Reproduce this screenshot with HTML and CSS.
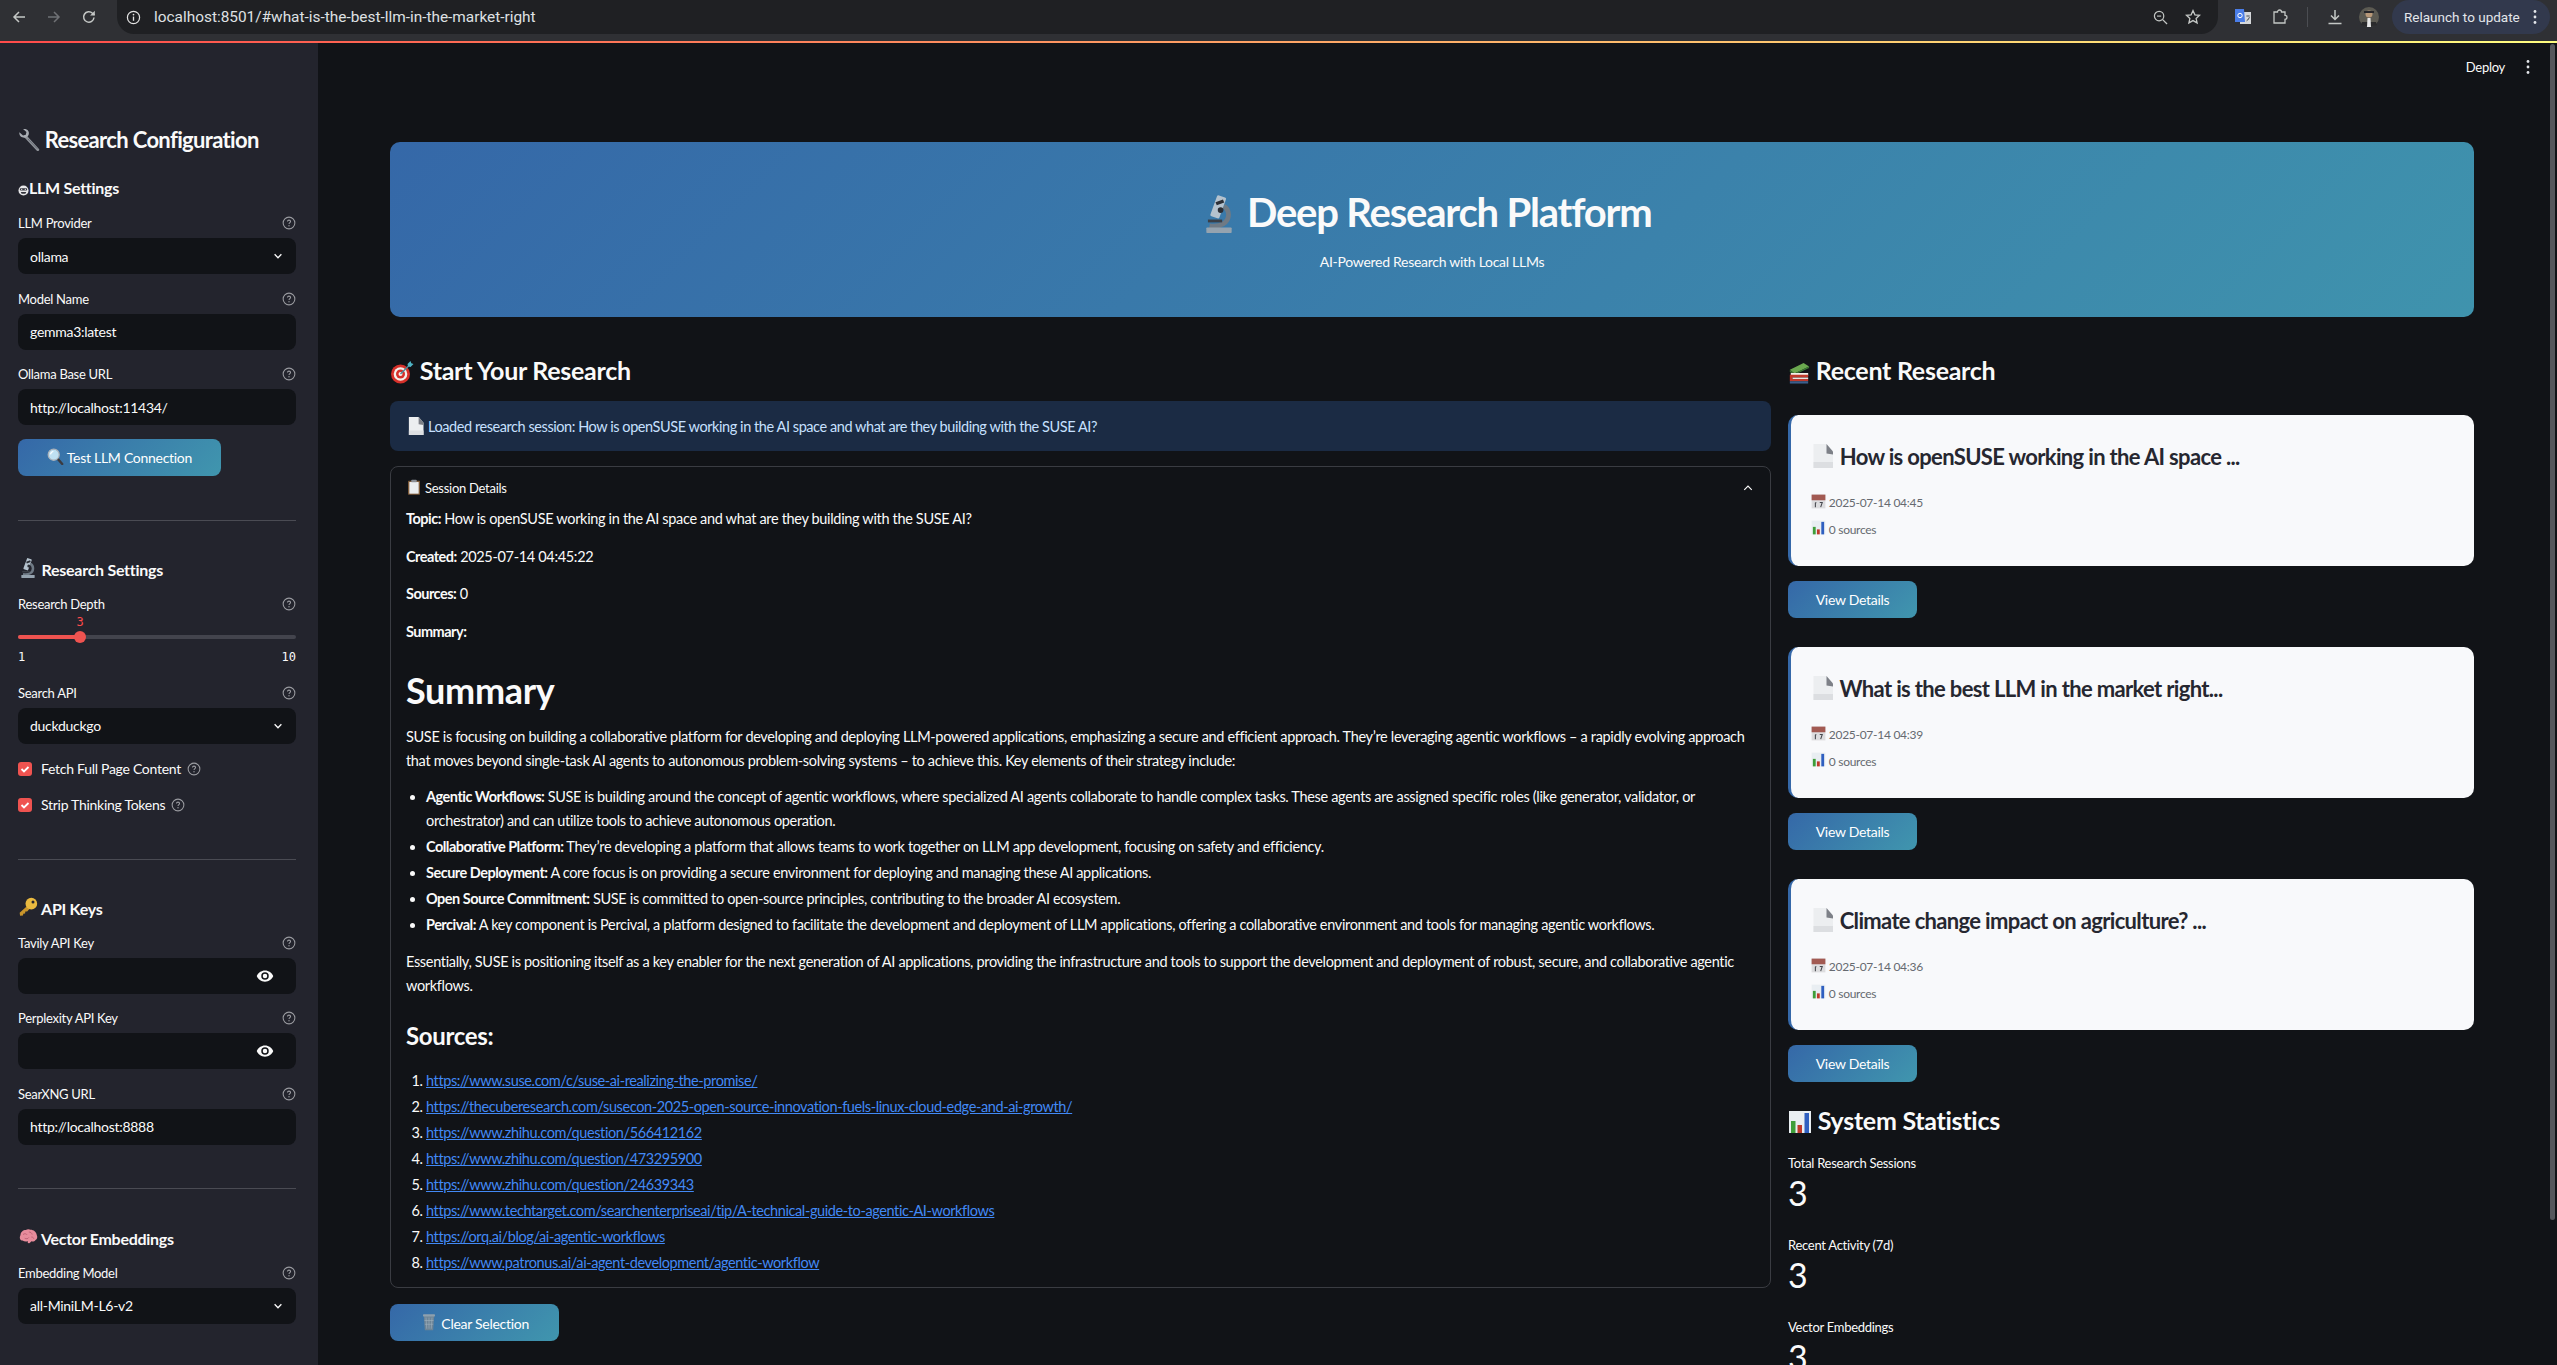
FILE: index.html
```html
<!DOCTYPE html>
<html lang="en">
<head>
    <meta charset="utf-8">
    <title>Deep Research Platform</title>
    <link rel="stylesheet" href="styles.css">
</head>
<body>

<!-- Emoji drawings, reused below -->
<svg class="defs" width="0" height="0" aria-hidden="true">
    <symbol id="e-wrench" viewBox="0 0 24 24">
        <path d="M8.500 8.500 21.500 22.500" stroke="#8e9298" stroke-width="3.200" stroke-linecap="round"/>
        <path d="M1.500 3.500 5.500 7l3-.7.7-3L5.500 0c3-.6 5.500.8 6.200 3.200.4 1.500.1 3-.8 4.300-1 1.300-2.500 2-4 2C3.500 9.500 1 7 1.500 3.500z" fill="#a9adb3"/>
        <path d="M11 11 21 21.500" stroke="#5f656e" stroke-width=".9"/>
    </symbol>
    <symbol id="e-robot" viewBox="0 0 24 24">
        <circle cx="12" cy="12" r="11" fill="#e8e8ea"/>
        <rect x="4" y="7" width="16" height="5" rx="2" fill="#33343c"/>
        <circle cx="8" cy="9.500" r="1.500" fill="#e8e8ea"/><circle cx="16" cy="9.500" r="1.500" fill="#e8e8ea"/>
        <path d="M6 15h12l-2 4H8z" fill="#33343c"/>
    </symbol>
    <symbol id="e-micro" viewBox="0 0 24 24">
        <path d="M6 19.500c7 1 12-2 12-7 0-2.500-1.200-4.500-3-5.500" fill="none" stroke="#6f7a85" stroke-width="3"/>
        <rect x="4" y="20.500" width="16" height="3.500" rx=".5" fill="#95a3af"/>
        <rect x="8.500" y=".5" width="6" height="14" rx="1" fill="#b4c2ce" transform="rotate(20 11.500 7.500)"/>
        <path d="M9.800 4.500 14.500 2.800l.8 2-4.700 1.700z" fill="#2b2e35"/>
        <circle cx="13" cy="9.500" r="1.800" fill="#2b2e35"/>
        <rect x="5" y="15.500" width="9" height="1.800" fill="#3a3f47"/>
    </symbol>
    <symbol id="e-target" viewBox="0 0 24 24">
        <circle cx="10.500" cy="14" r="9.500" fill="#d6302a"/>
        <circle cx="10.500" cy="14" r="6.800" fill="#f4f0ec"/>
        <circle cx="10.500" cy="14" r="4.500" fill="#d6302a"/>
        <circle cx="10.500" cy="14" r="2" fill="#f4f0ec"/>
        <path d="M10.500 14 19 5.500" stroke="#4a8a9a" stroke-width="1.500"/>
        <path d="M17.500 4 20.500 1l.8 2.200 2.200.8-3 3-2.400-.5z" fill="#4fb3c4"/>
    </symbol>
    <symbol id="e-page" viewBox="0 0 24 24">
        <path d="M2.500 0h13L22 7.500V24H2.500z" fill="#eceef0"/>
        <path d="M15.500 0 22 7.500v3l-6.500-1z" fill="#7d8087"/>
        <path d="M2.500 18h19.500v6H2.500z" fill="#dcdee1"/>
    </symbol>
    <symbol id="e-clip" viewBox="0 0 24 24">
        <rect x="3" y="2.500" width="18" height="21" rx="1" fill="#7d5a38"/>
        <rect x="5" y="4.500" width="14" height="17.500" fill="#eceef0"/>
        <rect x="8" y="1" width="8" height="4" rx="1" fill="#8c8f96"/>
    </symbol>
    <symbol id="e-lens" viewBox="0 0 24 24">
        <path d="m14 14 7.500 8.500" stroke="#3b3b40" stroke-width="3.400" stroke-linecap="round"/>
        <circle cx="9.500" cy="9.500" r="7.800" fill="#bfe0f2" stroke="#aab2ba" stroke-width="1.800"/>
        <path d="M5 9c.3-2.200 1.800-3.800 4-4" stroke="#fff" stroke-width="1.600" fill="none"/>
    </symbol>
    <symbol id="e-key" viewBox="0 0 24 24">
        <path d="m13 9-11 10 .5 3.500 3.500-.3.300-2.200 2.200-.3.300-2.200 2.200-.2L15 13z" fill="#c9952b"/>
        <circle cx="16" cy="8" r="7" fill="#e9b93f"/>
        <circle cx="18" cy="6" r="1.800" fill="#24252e"/>
    </symbol>
    <symbol id="e-brain" viewBox="0 0 24 24">
        <path d="M3 9.500C3 6 6 3.500 9.500 3.500c1.200-1 4-1.200 5.500-.2 3.800 0 7 2.700 7.500 6.200 1.200 2.200.6 5-1.500 6-1 1.600-3 2.300-5 1.700-.5.900-1.300 1.800-2.500 2.300l-1.800-.2.300-2.300c-2.200.7-5 .5-6.500-.8-2.500 0-4.500-2.700-2.500-6.700z" fill="#e88c9c"/>
        <path d="M6 9c2-1.500 4-1 5 .5M13 6c2 0 3.500 1 4 3M8 13.500c2 1 4 .8 5-1M16 12c1.500 0 2.700.7 3 2" stroke="#b85c70" stroke-width="1" fill="none"/>
    </symbol>
    <symbol id="e-trash" viewBox="0 0 24 24">
        <path d="M5 4h14l-1.500 19h-11z" fill="#6d8496"/>
        <path d="M8 6l1 15M12 6v15M16 6l-1 15M6 10h12M6.500 15h11" stroke="#9fb2c0" stroke-width=".8"/>
        <rect x="4" y="1.500" width="16" height="3" rx="1" fill="#8ea0ae"/>
    </symbol>
    <symbol id="e-books" viewBox="0 0 24 24">
        <path d="M2 8.500 17 1l6 4L7 12.500z" fill="#6aa84f"/>
        <path d="M2 8.500v2.500l5 3 16-7.500V5L7 12.500z" fill="#3d7a35"/>
        <path d="M3 12h19v3H3z" fill="#f1efe9"/>
        <path d="M2 14h20v3H5v1.500h17V21H2z" fill="#c0392b"/>
        <path d="M5 17h17v1.500H5z" fill="#f1efe9"/>
        <path d="M2 21h20v2.500H2z" fill="#3b5e8c"/>
    </symbol>
    <symbol id="e-cal" viewBox="0 0 24 24">
        <rect x="1" y="1" width="22" height="22" fill="#dddddf"/>
        <rect x="1" y="1" width="22" height="9" fill="#a25a52"/>
        <path d="M8.500 13.500 7 14.500V21M14 13.500h4l-2.500 7.500" stroke="#46484e" stroke-width="1.700" fill="none"/>
    </symbol>
    <symbol id="e-chart" viewBox="0 0 24 24">
        <rect x="1" y="1" width="22" height="22" fill="#e9eef2"/>
        <rect x="3" y="11" width="4.500" height="12" fill="#3f9e3a"/>
        <rect x="9.500" y="15" width="4.500" height="8" fill="#c0392b"/>
        <rect x="16.500" y="3" width="4.500" height="20" fill="#2f5fc0"/>
    </symbol>
    <symbol id="i-help" viewBox="0 0 16 16">
        <circle cx="8" cy="8" r="6.700" fill="none" stroke="#9a9ba0" stroke-width="1.200"/>
        <path d="M6.200 6.300C6.300 5.200 7 4.700 8 4.700c1.100 0 1.800.7 1.800 1.500 0 1.300-1.800 1.400-1.800 3" fill="none" stroke="#9a9ba0" stroke-width="1.200"/>
        <circle cx="8" cy="11.200" r=".8" fill="#9a9ba0"/>
    </symbol>
    <symbol id="i-chevron" viewBox="0 0 16 16">
        <path d="M3.500 5.800 8 10.300l4.500-4.500" fill="none" stroke="#fafafa" stroke-width="1.800"/>
    </symbol>
    <symbol id="i-eye" viewBox="0 0 24 24">
        <path d="M12 4.500C7 4.500 2.700 7.600 1 12c1.700 4.400 6 7.500 11 7.500s9.300-3.100 11-7.500c-1.700-4.400-6-7.500-11-7.500zm0 12.500a5 5 0 1 1 0-10 5 5 0 0 1 0 10zm0-8a3 3 0 1 0 0 6 3 3 0 0 0 0-6z" fill="#fafafa"/>
    </symbol>
    <symbol id="i-kebab" viewBox="0 0 4 16">
        <circle cx="2" cy="2.500" r="1.400"/><circle cx="2" cy="8" r="1.400"/><circle cx="2" cy="13.500" r="1.400"/>
    </symbol>
</svg>

<!-- Browser toolbar -->
<div class="chrome">
    <div class="nav-btns">
        <svg class="nav-icon" viewBox="0 0 16 16"><path d="M14 8H3M8 3 3 8l5 5" fill="none" stroke="#c4c7c5" stroke-width="1.500"/></svg>
        <svg class="nav-icon" viewBox="0 0 16 16"><path d="M2 8h11M8 3l5 5-5 5" fill="none" stroke="#6f7175" stroke-width="1.500"/></svg>
        <svg class="nav-icon" viewBox="0 0 16 16"><path d="M13 8.500A5.200 5.200 0 1 1 11.500 4.300L13.500 6" fill="none" stroke="#c4c7c5" stroke-width="1.500"/><path d="M13.800 1.800v4.700H9.100z" fill="#c4c7c5"/></svg>
    </div>
    <div class="omnibox">
        <span class="site-info">
            <svg viewBox="0 0 16 16" width="15" height="15"><circle cx="8" cy="8" r="6.500" fill="none" stroke="#e3e3e3" stroke-width="1.300"/><path d="M8 7v4.500" stroke="#e3e3e3" stroke-width="1.400"/><circle cx="8" cy="4.900" r=".9" fill="#e3e3e3"/></svg>
        </span>
        <span class="url">localhost:8501/#what-is-the-best-llm-in-the-market-right</span>
        <span class="omni-icons">
            <svg viewBox="0 0 16 16" width="15" height="15"><circle cx="6.500" cy="6.500" r="5" fill="none" stroke="#c4c7c5" stroke-width="1.300"/><path d="m10.300 10.300 4.700 4.700" stroke="#c4c7c5" stroke-width="1.400"/><path d="M4.300 6.500h4.400" stroke="#c4c7c5" stroke-width="1.200"/></svg>
            <svg viewBox="0 0 16 16" width="16" height="16"><path d="m8 1.600 1.900 4.200 4.600.5-3.400 3.100 1 4.500L8 11.600l-4.100 2.300 1-4.500L1.500 6.300l4.600-.5z" fill="none" stroke="#c4c7c5" stroke-width="1.300"/></svg>
        </span>
    </div>
    <div class="tool-icons">
        <svg viewBox="0 0 16 16" width="16" height="16"><rect x="5" y="3" width="11" height="12" fill="#d5d7da"/><path d="M0 0h9l1 13H0z" fill="#4a7de8"/><circle cx="5" cy="6.500" r="2.200" fill="none" stroke="#fff" stroke-width="1"/><path d="M11 7h4M13 6v2M11.500 12c1.500-1 2.500-2 3-4" stroke="#6c7078" stroke-width=".9"/></svg>
        <svg viewBox="0 0 16 16" width="16" height="16"><path d="M2 3h3.500a2 2 0 0 1 4 0H13v3.300a2 2 0 0 1 0 4V14H2z" fill="none" stroke="#c4c7c5" stroke-width="1.300"/></svg>
        <span class="tool-sep"></span>
        <svg viewBox="0 0 16 16" width="16" height="16"><path d="M8 1v9M4 6.500 8 10.500l4-4M1.500 14.500h13" fill="none" stroke="#c4c7c5" stroke-width="1.500"/></svg>
        <svg class="avatar" viewBox="0 0 20 20" width="20" height="20"><circle cx="10" cy="10" r="10" fill="#5c5a52"/><path d="M3 15h14l1 3-8 2-8-2z" fill="#2a2a2c"/><circle cx="10" cy="7" r="3.500" fill="#b89878"/><path d="M5 4h10v2H5z" fill="#26262a"/><path d="M8.500 11h3l.5 9H8z" fill="#e8e8e8"/></svg>
    </div>
    <div class="relaunch">
        <span>Relaunch to update</span>
        <svg class="kebab" viewBox="0 0 4 16" width="4" height="16"><use href="#i-kebab"/></svg>
    </div>
</div>
<div class="deco-line"></div>

<div class="app">
    <!-- Sidebar -->
    <aside class="sidebar">
        <h2 class="side-title"><svg class="emoji em-22"><use href="#e-wrench"/></svg> Research Configuration</h2>

        <h3 class="sec-head sec-first"><svg class="emoji em-11"><use href="#e-robot"/></svg>LLM Settings</h3>
        <div class="field">
            <div class="field-label"><span>LLM Provider</span><svg class="help"><use href="#i-help"/></svg></div>
            <div class="control">ollama<svg class="chev"><use href="#i-chevron"/></svg></div>
        </div>
        <div class="field">
            <div class="field-label"><span>Model Name</span><svg class="help"><use href="#i-help"/></svg></div>
            <div class="control">gemma3:latest</div>
        </div>
        <div class="field">
            <div class="field-label"><span>Ollama Base URL</span><svg class="help"><use href="#i-help"/></svg></div>
            <div class="control">http://localhost:11434/</div>
        </div>
        <button class="btn btn-side"><svg class="emoji em-17"><use href="#e-lens"/></svg> Test LLM Connection</button>

        <hr class="side-rule">

        <h3 class="sec-head"><svg class="emoji em-20"><use href="#e-micro"/></svg> Research Settings</h3>
        <div class="field-label"><span>Research Depth</span><svg class="help"><use href="#i-help"/></svg></div>
        <div class="slider">
            <div class="slider-value">3</div>
            <div class="slider-track"><div class="slider-fill"></div><div class="slider-thumb"></div></div>
            <div class="slider-ends"><span>1</span><span>10</span></div>
        </div>
        <div class="field field-tight">
            <div class="field-label"><span>Search API</span><svg class="help"><use href="#i-help"/></svg></div>
            <div class="control">duckduckgo<svg class="chev"><use href="#i-chevron"/></svg></div>
        </div>
        <div class="check"><span class="box"><svg viewBox="0 0 14 14" width="14" height="14"><path d="m3.500 7 2.500 2.500 4.500-4.500" fill="none" stroke="#fff" stroke-width="1.800"/></svg></span>Fetch Full Page Content<svg class="help help-inline"><use href="#i-help"/></svg></div>
        <div class="check"><span class="box"><svg viewBox="0 0 14 14" width="14" height="14"><path d="m3.500 7 2.500 2.500 4.500-4.500" fill="none" stroke="#fff" stroke-width="1.800"/></svg></span>Strip Thinking Tokens<svg class="help help-inline"><use href="#i-help"/></svg></div>

        <hr class="side-rule rule-checks">

        <h3 class="sec-head"><svg class="emoji em-20"><use href="#e-key"/></svg> API Keys</h3>
        <div class="field">
            <div class="field-label"><span>Tavily API Key</span><svg class="help"><use href="#i-help"/></svg></div>
            <div class="control"><svg class="eye"><use href="#i-eye"/></svg></div>
        </div>
        <div class="field">
            <div class="field-label"><span>Perplexity API Key</span><svg class="help"><use href="#i-help"/></svg></div>
            <div class="control"><svg class="eye"><use href="#i-eye"/></svg></div>
        </div>
        <div class="field">
            <div class="field-label"><span>SearXNG URL</span><svg class="help"><use href="#i-help"/></svg></div>
            <div class="control">http://localhost:8888</div>
        </div>

        <hr class="side-rule rule-keys">

        <h3 class="sec-head sec-vector"><svg class="emoji em-20"><use href="#e-brain"/></svg> Vector Embeddings</h3>
        <div class="field">
            <div class="field-label"><span>Embedding Model</span><svg class="help"><use href="#i-help"/></svg></div>
            <div class="control">all-MiniLM-L6-v2<svg class="chev"><use href="#i-chevron"/></svg></div>
        </div>
    </aside>

    <!-- Main -->
    <main class="main">
        <div class="top-actions">
            <span>Deploy</span>
            <svg class="kebab" viewBox="0 0 4 16" width="4" height="16"><use href="#i-kebab"/></svg>
        </div>

        <header class="hero">
            <h1><svg class="emoji em-38"><use href="#e-micro"/></svg> Deep Research Platform</h1>
            <p>AI-Powered Research with Local LLMs</p>
        </header>

        <div class="columns">
            <section class="col-left">
                <h2 class="col-head"><svg class="emoji em-24"><use href="#e-target"/></svg> Start Your Research</h2>
                <div class="alert"><svg class="emoji em-18"><use href="#e-page"/></svg> Loaded research session: How is openSUSE working in the AI space and what are they building with the SUSE AI?</div>

                <div class="expander">
                    <div class="exp-head">
                        <span><svg class="emoji em-16"><use href="#e-clip"/></svg> Session Details</span>
                        <svg class="exp-chev" viewBox="0 0 16 16" width="12" height="12"><path d="M3 10.500 8 5.500l5 5" fill="none" stroke="#fafafa" stroke-width="1.600"/></svg>
                    </div>
                    <div class="exp-body">
                        <p class="meta-line"><b>Topic:</b> How is openSUSE working in the AI space and what are they building with the SUSE AI?</p>
                        <p class="meta-line"><b>Created:</b> 2025-07-14 04:45:22</p>
                        <p class="meta-line"><b>Sources:</b> 0</p>
                        <p class="meta-line"><b>Summary:</b></p>

                        <h1 class="doc-h1">Summary</h1>
                        <p class="doc-p">SUSE is focusing on building a collaborative platform for developing and deploying LLM-powered applications, emphasizing a secure and efficient approach. They’re leveraging agentic workflows – a rapidly evolving approach<br>that moves beyond single-task AI agents to autonomous problem-solving systems – to achieve this. Key elements of their strategy include:</p>
                        <ul class="doc-list">
                            <li><b>Agentic Workflows:</b> SUSE is building around the concept of agentic workflows, where specialized AI agents collaborate to handle complex tasks. These agents are assigned specific roles (like generator, validator, or<br>orchestrator) and can utilize tools to achieve autonomous operation.</li>
                            <li><b>Collaborative Platform:</b> They’re developing a platform that allows teams to work together on LLM app development, focusing on safety and efficiency.</li>
                            <li><b>Secure Deployment:</b> A core focus is on providing a secure environment for deploying and managing these AI applications.</li>
                            <li><b>Open Source Commitment:</b> SUSE is committed to open-source principles, contributing to the broader AI ecosystem.</li>
                            <li><b>Percival:</b> A key component is Percival, a platform designed to facilitate the development and deployment of LLM applications, offering a collaborative environment and tools for managing agentic workflows.</li>
                        </ul>
                        <p class="doc-p">Essentially, SUSE is positioning itself as a key enabler for the next generation of AI applications, providing the infrastructure and tools to support the development and deployment of robust, secure, and collaborative agentic<br>workflows.</p>

                        <h3 class="doc-h3">Sources:</h3>
                        <ol class="doc-links">
                            <li><a href="#">https://www.suse.com/c/suse-ai-realizing-the-promise/</a></li>
                            <li><a href="#">https://thecuberesearch.com/susecon-2025-open-source-innovation-fuels-linux-cloud-edge-and-ai-growth/</a></li>
                            <li><a href="#">https://www.zhihu.com/question/566412162</a></li>
                            <li><a href="#">https://www.zhihu.com/question/473295900</a></li>
                            <li><a href="#">https://www.zhihu.com/question/24639343</a></li>
                            <li><a href="#">https://www.techtarget.com/searchenterpriseai/tip/A-technical-guide-to-agentic-AI-workflows</a></li>
                            <li><a href="#">https://orq.ai/blog/ai-agentic-workflows</a></li>
                            <li><a href="#">https://www.patronus.ai/ai-agent-development/agentic-workflow</a></li>
                        </ol>
                    </div>
                </div>
                <button class="btn btn-clear"><svg class="emoji em-18"><use href="#e-trash"/></svg> Clear Selection</button>
            </section>

            <section class="col-right">
                <h2 class="col-head"><svg class="emoji em-22"><use href="#e-books"/></svg> Recent Research</h2>

                <div class="card">
                    <h3><svg class="emoji em-24"><use href="#e-page"/></svg> How is openSUSE working in the AI space ...</h3>
                    <p><svg class="emoji em-15"><use href="#e-cal"/></svg> 2025-07-14 04:45</p>
                    <p><svg class="emoji em-15"><use href="#e-chart"/></svg> 0 sources</p>
                </div>
                <button class="btn btn-view">View Details</button>

                <div class="card">
                    <h3><svg class="emoji em-24"><use href="#e-page"/></svg> What is the best LLM in the market right...</h3>
                    <p><svg class="emoji em-15"><use href="#e-cal"/></svg> 2025-07-14 04:39</p>
                    <p><svg class="emoji em-15"><use href="#e-chart"/></svg> 0 sources</p>
                </div>
                <button class="btn btn-view">View Details</button>

                <div class="card">
                    <h3><svg class="emoji em-24"><use href="#e-page"/></svg> Climate change impact on agriculture? ...</h3>
                    <p><svg class="emoji em-15"><use href="#e-cal"/></svg> 2025-07-14 04:36</p>
                    <p><svg class="emoji em-15"><use href="#e-chart"/></svg> 0 sources</p>
                </div>
                <button class="btn btn-view">View Details</button>

                <h2 class="col-head stats-head"><svg class="emoji em-24"><use href="#e-chart"/></svg> System Statistics</h2>
                <div class="stat"><div class="stat-label">Total Research Sessions</div><div class="stat-value">3</div></div>
                <div class="stat"><div class="stat-label">Recent Activity (7d)</div><div class="stat-value">3</div></div>
                <div class="stat"><div class="stat-label">Vector Embeddings</div><div class="stat-value">3</div></div>
            </section>
        </div>

        <div class="scroll-thumb"></div>
    </main>
</div>

</body>
</html>
```

FILE: styles.css
```css
/* General Layout */
* {
    box-sizing: border-box;
}

html, body {
    margin: 0;
    height: 100%;
}

body {
    background: #111317;
    color: #fafafa;
    font-family: 'Lato', 'Noto Sans', sans-serif;
    font-size: 14px;
    letter-spacing: -0.02em;
    display: flex;
    flex-direction: column;
    height: 1365px;
    overflow: hidden;
}

.defs {
    position: absolute;
}

.emoji {
    display: inline-block;
    vertical-align: -0.14em;
}

.em-11 { width: 11px; height: 11px; }
.em-15 { width: 15px; height: 15px; }
.em-16 { width: 16px; height: 16px; }
.em-17 { width: 17px; height: 17px; }
.em-18 { width: 18px; height: 18px; }
.em-20 { width: 20px; height: 20px; }
.em-22 { width: 22px; height: 22px; }
.em-24 { width: 24px; height: 24px; }
.em-38 { width: 38px; height: 38px; }

/* Browser Toolbar */
.chrome {
    flex: none;
    height: 41px;
    background: #2f3034;
    display: flex;
    align-items: flex-start;
}

.nav-btns {
    width: 117px;
    height: 34px;
    display: flex;
    align-items: center;
    padding-left: 11px;
    gap: 19px;
}

.nav-icon {
    width: 16px;
    height: 16px;
}

.omnibox {
    width: 2101px;
    height: 34px;
    background: #1f2023;
    border-radius: 0 0 17px 17px;
    display: flex;
    align-items: center;
    padding: 0 17px 0 9px;
}

.site-info {
    display: flex;
    margin-right: 13px;
}

.url {
    flex: 1;
    font-family: 'Roboto', sans-serif;
    font-size: 15.400px;
    letter-spacing: 0;
    color: #dfe1e3;
}

.omni-icons {
    display: flex;
    align-items: center;
    gap: 17px;
}

.tool-icons {
    width: 174px;
    height: 34px;
    display: flex;
    align-items: center;
    padding-left: 17px;
    gap: 21px;
}

.tool-sep {
    width: 1px;
    height: 20px;
    background: #4b4d52;
    margin: 0 -2px;
}

.avatar {
    margin-left: -5px;
}

.relaunch {
    width: 158px;
    height: 34px;
    border-radius: 17px;
    background: #32394d;
    display: flex;
    align-items: center;
    justify-content: space-between;
    padding: 0 13px 0 12px;
    font-family: 'Roboto', sans-serif;
    font-size: 13.500px;
    letter-spacing: 0;
    color: #e3e6ea;
}

.kebab {
    fill: #e3e6ea;
}

.deco-line {
    flex: none;
    height: 2px;
    background: linear-gradient(90deg, #ff4b4b, #fffd80);
}

.app {
    flex: 1;
    display: flex;
    min-height: 0;
}

/* Sidebar */
.sidebar {
    flex: none;
    width: 318px;
    background: #23242d;
    padding: 79px 22px 0 18px;
    overflow: hidden;
}

.side-title {
    margin: 0;
    height: 36px;
    font-size: 22px;
    font-weight: 700;
    letter-spacing: -0.03em;
    line-height: 35px;
}

.sec-head {
    margin: 34px 0 9px;
    height: 30px;
    font-size: 16px;
    font-weight: 700;
    line-height: 30px;
}

.sec-first {
    margin: 15px 0 10px;
}

.sec-vector {
    margin-top: 35px;
}

.field {
    margin-bottom: 14.500px;
}

.field-label {
    height: 20px;
    margin-bottom: 5px;
    display: flex;
    justify-content: space-between;
    align-items: center;
    font-size: 13px;
    line-height: 20px;
}

.help {
    width: 14px;
    height: 14px;
    flex: none;
}

.help-inline {
    margin-left: 6px;
    vertical-align: -2px;
}

.control {
    height: 36px;
    background: #111317;
    border-radius: 8px;
    padding: 0 12px;
    display: flex;
    align-items: center;
    justify-content: space-between;
    font-size: 14px;
}

.chev {
    width: 12px;
    height: 12px;
}

.eye {
    width: 18px;
    height: 18px;
    margin-left: auto;
    margin-right: 10px;
}

.side-rule {
    border: none;
    border-top: 1px solid #4a4b53;
    margin: 44px 0 0;
}

.rule-checks {
    margin-top: 45px;
}

.rule-keys {
    margin-top: 43px;
}

/* Slider */
.slider {
    height: 54px;
    margin: -5px 0 14.500px;
    position: relative;
}

.slider-value {
    position: absolute;
    left: 56px;
    width: 12px;
    top: 0;
    text-align: center;
    color: #ff4b4b;
    font-family: 'DejaVu Sans Mono', monospace;
    font-size: 12px;
    letter-spacing: 0;
    line-height: 16px;
}

.slider-track {
    position: absolute;
    top: 21px;
    left: 0;
    right: 0;
    height: 4px;
    background: #43444d;
    border-radius: 2px;
}

.slider-fill {
    width: 62px;
    height: 4px;
    background: #ef5350;
    border-radius: 2px;
}

.slider-thumb {
    position: absolute;
    left: 56px;
    top: -4px;
    width: 12px;
    height: 12px;
    border-radius: 50%;
    background: #ef5350;
}

.slider-ends {
    position: absolute;
    top: 34px;
    left: 0;
    right: 0;
    display: flex;
    justify-content: space-between;
    font-family: 'DejaVu Sans Mono', monospace;
    font-size: 12px;
    letter-spacing: 0;
    line-height: 18px;
}

.field-tight {
    margin-bottom: 0;
}

/* Checkboxes */
.check {
    margin-top: 16px;
    height: 18px;
    display: flex;
    align-items: center;
    font-size: 14px;
    line-height: 14px;
}

.box {
    width: 14px;
    height: 14px;
    border-radius: 3px;
    background: #ef5350;
    margin-right: 9px;
    display: flex;
}

.check + .check {
    margin-top: 18px;
}

/* Main */
.main {
    flex: 1;
    min-width: 0;
    padding: 99px 83px 0 72px;
    position: relative;
    overflow: hidden;
}

.top-actions {
    position: absolute;
    top: 16px;
    right: 27px;
    display: flex;
    align-items: center;
    gap: 21px;
    font-size: 13px;
}

.scroll-thumb {
    position: absolute;
    right: 2px;
    top: 1px;
    width: 5px;
    height: 1176px;
    border-radius: 3px;
    background: #55575c;
}

/* Hero */
.hero {
    height: 175px;
    border-radius: 10px;
    background: linear-gradient(135deg, #3568a8, #3f93ad);
    text-align: center;
    padding-top: 42px;
}

.hero h1 {
    margin: 0;
    height: 56px;
    padding-right: 12px;
    font-size: 40px;
    font-weight: 700;
    letter-spacing: -0.03em;
    line-height: 56px;
}

.hero p {
    margin: 10px 0 0;
    font-size: 14px;
    line-height: 24px;
}

.columns {
    display: flex;
    gap: 17px;
    align-items: flex-start;
}

.col-left {
    width: 1381px;
    flex: none;
}

.col-right {
    flex: 1;
    min-width: 0;
}

.col-head {
    margin: 36px 0 0;
    height: 36px;
    font-size: 25px;
    font-weight: 700;
    line-height: 34px;
}

/* Alert */
.alert {
    margin-top: 12px;
    height: 50px;
    background: #1b2b44;
    border-radius: 8px;
    padding: 0 17px;
    color: #c7e0ff;
    font-size: 14.500px;
    letter-spacing: -0.03em;
    display: flex;
    align-items: center;
    gap: 3px;
}

/* Expander */
.expander {
    margin-top: 15px;
    height: 822px;
    border: 1px solid #3a3c42;
    border-radius: 8px;
}

.exp-head {
    height: 40px;
    padding: 2px 16px 0 15px;
    display: flex;
    align-items: center;
    justify-content: space-between;
    font-size: 13px;
}

.exp-body {
    padding: 0 15px;
    font-size: 14.500px;
    letter-spacing: -0.023em;
    line-height: 24px;
    white-space: nowrap;
}

.exp-body b {
    font-weight: 700;
    letter-spacing: -0.035em;
}

.meta-line {
    margin: 0 0 13.700px;
}

.doc-h1 {
    margin: 21px 0 10px;
    font-size: 36px;
    font-weight: 700;
    line-height: 50px;
}

.doc-p {
    margin: 0;
}

.doc-list {
    margin: 12px 0 13px;
    padding-left: 20px;
}

.doc-list li {
    margin-bottom: 2px;
}

.doc-h3 {
    margin: 21px 0 16px;
    font-size: 24px;
    font-weight: 700;
    line-height: 34px;
}

.doc-links {
    margin: 0;
    padding-left: 20px;
}

.doc-links li {
    margin-bottom: 2px;
}

.doc-links a {
    color: #4289f5;
    letter-spacing: -0.027em;
}

/* Buttons */
.btn {
    display: block;
    border: none;
    height: 37px;
    border-radius: 8px;
    background: linear-gradient(135deg, #3568a8, #4096ae);
    color: #fff;
    font-family: inherit;
    font-size: 14px;
    letter-spacing: -0.02em;
    padding: 0;
    text-align: center;
}

.btn-side {
    width: 203px;
    margin-top: -0.500px;
}

.btn-clear {
    width: 169px;
    margin-top: 16px;
}

.btn-view {
    width: 129px;
    margin: 15px 0 29px;
}

/* Research Cards */
.card {
    height: 151px;
    background: #f8f9fb;
    border-left: 3px solid #3568a8;
    border-radius: 10px;
    padding: 27px 0 0 20px;
    color: #666a70;
}

.col-head + .card {
    margin-top: 26px;
}

.card h3 {
    margin: 0 0 21px;
    height: 30px;
    color: #262730;
    font-size: 22px;
    font-weight: 700;
    letter-spacing: -0.03em;
    line-height: 30px;
}

.card p {
    margin: 0 0 6.700px;
    font-size: 12px;
    line-height: 20px;
}

/* Statistics */
.stats-head {
    margin-top: -8px;
}

.stat {
    margin-top: 14px;
    height: 68px;
}

.stat-label {
    height: 20px;
    font-size: 13px;
    line-height: 20px;
}

.stat-value {
    margin-top: 0;
    font-size: 34px;
    line-height: 40px;
}
```
